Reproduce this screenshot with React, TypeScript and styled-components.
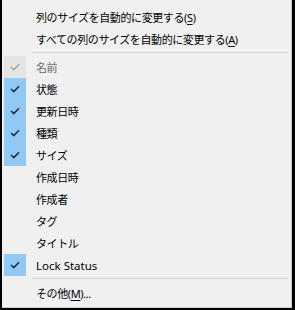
import React from "react"
import styled, { createGlobalStyle } from "styled-components"

const GlobalStyle = createGlobalStyle`
  html, body {
    margin: 0;
    padding: 0;
    background: #000;
  }
`

type Item = { label: string; checked?: boolean; disabled?: boolean; latin?: boolean }

const columns: Item[] = [
  { label: "名前", checked: true, disabled: true },
  { label: "状態", checked: true },
  { label: "更新日時", checked: true },
  { label: "種類", checked: true },
  { label: "サイズ", checked: true },
  { label: "作成日時" },
  { label: "作成者" },
  { label: "タグ" },
  { label: "タイトル" },
  { label: "Lock Status", checked: true, latin: true },
]

const Check = ({ disabled }: { disabled?: boolean }) => (
  <svg width="10" height="8" viewBox="0 0 10 8">
    <polyline
      points="1,4 3.8,6.6 9,1.2"
      fill="none"
      stroke={disabled ? "#a6a6a6" : "#2b2b2b"}
      strokeWidth="1.5"
    />
  </svg>
)

const App = () => {
  return (
    <>
      <GlobalStyle />
      <Frame>
        <Menu>
          <Row>
            <CheckCell />
            <Label>
              列のサイズを自動的に変更する(<u>S</u>)
            </Label>
          </Row>
          <Row>
            <CheckCell />
            <Label>
              すべての列のサイズを自動的に変更する(<u>A</u>)
            </Label>
          </Row>
          <Separator />
          {columns.map((c) => (
            <Row key={c.label}>
              <CheckCell $checked={c.checked} $disabled={c.disabled}>
                {c.checked && <Check disabled={c.disabled} />}
              </CheckCell>
              <Label $disabled={c.disabled} $latin={c.latin}>
                {c.label}
              </Label>
            </Row>
          ))}
          <Separator />
          <Row>
            <CheckCell />
            <Label>
              その他(<u>M</u>)...
            </Label>
          </Row>
        </Menu>
      </Frame>
    </>
  )
}

const Frame = styled.div`
  width: 295px;
  height: 310px;
  padding: 0 2px 2px 2px;
  box-sizing: border-box;
  background: #000;
`

const Menu = styled.div`
  height: 308px;
  box-sizing: border-box;
  background: #f0f0f0;
  padding: 6px 0 0 0;
  border-right: 1px solid #cfcfcf;
  border-bottom: 1px solid #cfcfcf;
  margin-right: 1px;
  display: flex;
  flex-direction: column;
  font-family: "Noto Sans", "Noto Sans CJK JP", sans-serif;
  font-size: 11px;
  color: #000;
`

const Row = styled.div`
  display: flex;
  align-items: center;
  height: 22px;
`

const CheckCell = styled.div<{ $checked?: boolean; $disabled?: boolean }>`
  width: 22px;
  height: 22px;
  margin-left: 2px;
  display: flex;
  align-items: center;
  justify-content: center;
  background: ${(p) =>
    p.$checked ? (p.$disabled ? "#e4e4e4" : "#91c9f7") : "transparent"};
`

const Label = styled.span<{ $disabled?: boolean; $latin?: boolean }>`
  margin-left: 10px;
  white-space: nowrap;
  font-size: ${(p) => (p.$latin ? "11.5px" : "11px")};
  letter-spacing: ${(p) => (p.$latin ? "0" : "-0.4px")};
  color: ${(p) => (p.$disabled ? "#6d6d6d" : "#000")};
  u {
    text-underline-offset: 2px;
  }
`

const Separator = styled.div`
  height: 1px;
  background: #d7d7d7;
  margin: 2px 3px 3px 30px;
`

export default App
